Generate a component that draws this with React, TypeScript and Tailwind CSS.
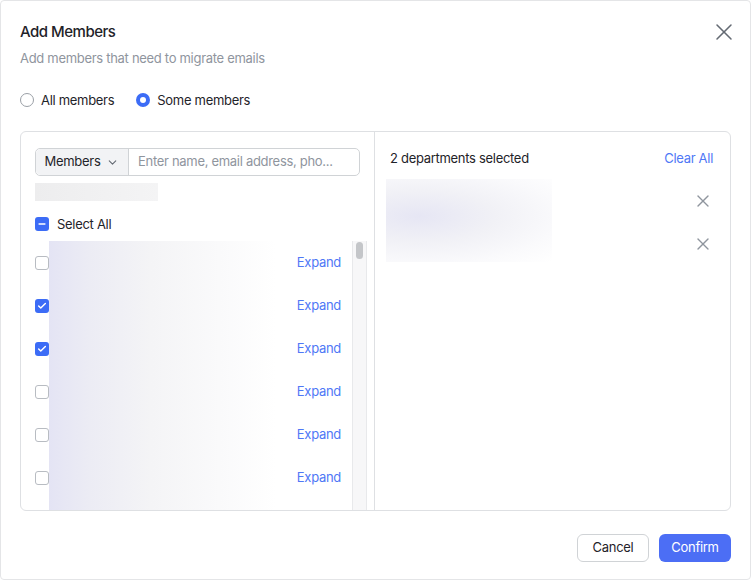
import { X, ChevronDown, Check, Minus } from 'lucide-react';

const rows = [false, true, true, false, false, false];

function Box({ checked }: { checked: boolean }) {
  if (checked) {
    return (
      <span className="flex h-[14px] w-[14px] shrink-0 items-center justify-center rounded-[3px] bg-[#3c6cf6]">
        <Check className="h-[10px] w-[10px] text-white" strokeWidth={3.5} />
      </span>
    );
  }
  return <span className="h-[14px] w-[14px] shrink-0 rounded-[3px] border border-[#b8bcc2] bg-white" />;
}

export default function App() {
  return (
    <div className="h-[580px] w-[751px] bg-white font-['Inter',sans-serif] tracking-[-0.3px] text-[#1f2329]">
      <div className="flex h-full flex-col rounded-[4px] border border-[#e4e5e7]">
        <div className="flex items-start justify-between pl-[19px] pr-[12px] pt-[20px]">
          <div>
            <h2 className="text-[15px] font-medium leading-[22px] tracking-[-0.5px]">Add Members</h2>
            <p className="mt-[5px] text-[13px] leading-[20px] text-[#8f959e]">Add members that need to migrate emails</p>
          </div>
          <button className="mt-[-3px] text-[#646a73]">
            <X className="h-[28px] w-[28px]" strokeWidth={1.3} />
          </button>
        </div>

        <div className="mt-[22px] flex items-center gap-[22px] px-[19px] text-[13px] leading-[20px]">
          <label className="flex items-center gap-[7px]">
            <span className="h-[14px] w-[14px] rounded-full border border-[#9a9fa6]" />
            All members
          </label>
          <label className="flex items-center gap-[7px]">
            <span className="flex h-[14px] w-[14px] items-center justify-center rounded-full bg-[#3c6cf6]">
              <span className="h-[6px] w-[6px] rounded-full bg-white" />
            </span>
            Some members
          </label>
        </div>

        <div className="mx-[19px] mt-[21px] flex h-[380px] overflow-hidden rounded-[6px] border border-[#dee0e3]">
          <div className="flex w-[354px] flex-col border-r border-[#dee0e3] pl-[14px] pr-[7px] pt-[16px]">
            <div className="mr-[7px] flex h-[28px] rounded-[5px] border border-[#d0d3d6] text-[13px]">
              <button className="flex w-[93px] items-center justify-center gap-[6px] rounded-l-[5px] border-r border-[#d0d3d6] bg-[#f2f3f5]">
                Members
                <ChevronDown className="h-[13px] w-[13px] text-[#646a73]" />
              </button>
              <input
                className="min-w-0 flex-1 px-[9px] text-[13px] tracking-[-0.3px] outline-none placeholder:text-[#8f959e]"
                placeholder="Enter name, email address, pho..."
              />
            </div>
            <div className="mt-[7px] h-[18px] w-[123px] bg-gradient-to-r from-[#ededee] to-[#f4f4f5]" />
            <div className="mt-[13px] flex items-center gap-[8px] text-[13px] leading-[20px]">
              <span className="flex h-[14px] w-[14px] items-center justify-center rounded-[3px] bg-[#3c6cf6]">
                <Minus className="h-[10px] w-[10px] text-white" strokeWidth={3.5} />
              </span>
              Select All
            </div>
            <div className="relative mt-[7px] flex flex-1">
              <div className="flex-1">
                {rows.map((c, i) => (
                  <div key={i} className="flex h-[43px] items-center justify-between pr-[11px]">
                    <Box checked={c} />
                    <span className="text-[13px] text-[#4f78f6]">Expand</span>
                  </div>
                ))}
              </div>
              <div className="w-[15px] border-x border-[#e8e9eb] bg-[#f7f7f8] pt-[1px]">
                <div className="mx-auto h-[17px] w-[7px] rounded-full bg-[#c4c6c9]" />
              </div>
              <div className="pointer-events-none absolute left-[14px] top-0 h-[290px] w-[227px] bg-[linear-gradient(90deg,#e4e4f4_0%,#ececf4_18%,#f4f4f6_45%,#fafafb_75%,#ffffff_100%)]" />
            </div>
          </div>

          <div className="flex flex-1 flex-col pl-[11px] pr-[17px] pt-[16px]">
            <div className="flex items-center justify-between pl-[4px] text-[13px] leading-[20px]">
              <span>2 departments selected</span>
              <button className="text-[#4f78f6]">Clear All</button>
            </div>
            <div className="relative mt-[11px]">
              {[0, 1].map((i) => (
                <div key={i} className="flex h-[43px] items-center justify-end pr-[-2px]">
                  <X className="h-[20px] w-[20px] text-[#8f959e]" strokeWidth={1.6} />
                </div>
              ))}
              <div className="pointer-events-none absolute left-0 top-0 h-[83px] w-[166px] bg-[radial-gradient(ellipse_at_20%_45%,#e6e6f4_0%,#f1f1f6_40%,#fafafc_75%,#ffffff_100%)]" />
            </div>
          </div>
        </div>

        <div className="mt-[23px] flex justify-end gap-[10px] px-[19px] text-[13px]">
          <button className="h-[28px] w-[72px] rounded-[6px] border border-[#d0d3d6] bg-white text-[#1f2329]">Cancel</button>
          <button className="h-[28px] w-[72px] rounded-[6px] bg-[#4c6ef5] text-white">Confirm</button>
        </div>
      </div>
    </div>
  );
}
